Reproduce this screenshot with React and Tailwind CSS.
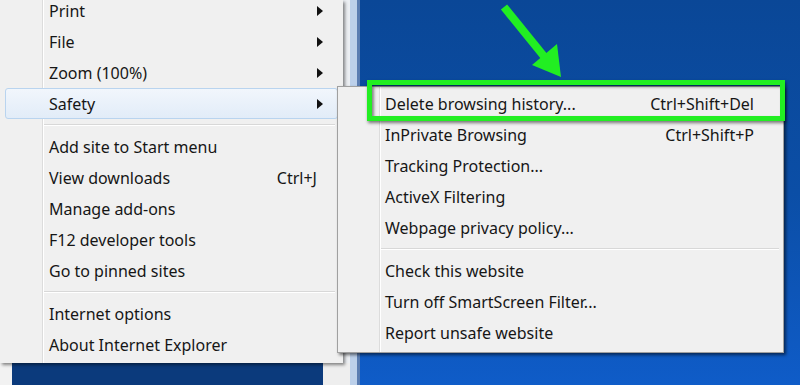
import React from "react";

const mainItems = [
  { label: "Print", sub: true },
  { label: "File", sub: true },
  { label: "Zoom (100%)", sub: true },
  { label: "Safety", sub: true, active: true },
  { sep: true },
  { label: "Add site to Start menu" },
  { label: "View downloads", key: "Ctrl+J" },
  { label: "Manage add-ons" },
  { label: "F12 developer tools" },
  { label: "Go to pinned sites" },
  { sep: true },
  { label: "Internet options" },
  { label: "About Internet Explorer" },
];

const safetyItems = [
  { label: "Delete browsing history...", key: "Ctrl+Shift+Del" },
  { label: "InPrivate Browsing", key: "Ctrl+Shift+P" },
  { label: "Tracking Protection..." },
  { label: "ActiveX Filtering" },
  { label: "Webpage privacy policy..." },
  { sep: true },
  { label: "Check this website" },
  { label: "Turn off SmartScreen Filter..." },
  { label: "Report unsafe website" },
];

function SubArrow() {
  return (
    <svg width="6" height="10" viewBox="0 0 6 10" className="shrink-0">
      <polygon points="0,0 6,5 0,10" fill="#111" />
    </svg>
  );
}

function Separator({ inset }) {
  return (
    <div className={`h-[12px] flex flex-col justify-center ${inset}`}>
      <div className="h-px bg-[#d8d8d8]" />
      <div className="h-px bg-white" />
    </div>
  );
}

function Gutter({ left }) {
  return (
    <div className={`absolute top-0 bottom-0 w-[2px] flex ${left}`}>
      <div className="w-px bg-[#dcdcdc]" />
      <div className="w-px bg-white" />
    </div>
  );
}

function MainMenu() {
  return (
    <div className="relative w-[343px] h-[363px] bg-[#f0f0f0] shadow-[2px_2px_3px_rgba(0,0,0,0.45)] overflow-hidden">
      <Gutter left="left-[42px]" />
      <div className="relative flex flex-col mt-[-5px]">
        {mainItems.map((it, i) =>
          it.sep ? (
            <Separator key={i} inset="ml-[44px] mr-[8px]" />
          ) : (
            <div
              key={i}
              className={`h-[31px] flex items-center ml-[5px] mr-[5px] pl-[43px] pr-[14px] border ${
                it.active
                  ? "rounded-[3px] border-[#b9d4ef] bg-gradient-to-b from-[#f1f6fc] to-[#e2ecf8]"
                  : "border-transparent"
              }`}
            >
              <span className="flex-1">{it.label}</span>
              {it.key && <span className="mr-[6px]">{it.key}</span>}
              {it.sub && <SubArrow />}
            </div>
          )
        )}
      </div>
    </div>
  );
}

function SafetyMenu() {
  return (
    <div className="absolute left-[337px] top-[86px] w-[447px] h-[267px] bg-[#f0f0f0] border border-[#a0a0a0] shadow-[2px_2px_3px_rgba(0,0,0,0.55)]">
      <Gutter left="left-[41px]" />
      <div className="relative flex flex-col pt-[1px]">
        {safetyItems.map((it, i) =>
          it.sep ? (
            <Separator key={i} inset="ml-[43px] mr-[4px]" />
          ) : (
            <div key={i} className="h-[31px] flex items-center pl-[47px] pr-[29px]">
              <span className="flex-1">{it.label}</span>
              {it.key && <span>{it.key}</span>}
            </div>
          )
        )}
      </div>
    </div>
  );
}

export default function App() {
  return (
    <div className="relative w-[800px] h-[385px] overflow-hidden flex font-['Noto_Sans',sans-serif] text-[16px] text-[#161616]">
      {/* IE window behind the menus */}
      <div className="w-[350px] flex flex-col bg-[#eceff3]">
        <MainMenu />
        <div className="flex-1 flex">
          <div className="w-[12px] bg-[#f2f2f2]" />
          <div className="w-[311px] bg-[#0b3a7c]" />
          <div className="flex-1 bg-[#eeeeee]" />
        </div>
      </div>
      <div className="w-[7px] bg-[#bcd0ea]" />
      <div className="w-[3px] bg-[#5a7db2]" />
      <div className="flex-1 bg-gradient-to-b from-[#0a4797] via-[#0b4ea6] to-[#0f5cc8]" />

      <SafetyMenu />

      {/* green highlight frame around "Delete browsing history" */}
      <div className="absolute left-[367px] top-[80px] w-[418px] h-[41px] border-[5px] border-[#22ee22] shadow-[1px_2px_3px_rgba(0,0,0,0.5)]">
        <div className="w-full h-full shadow-[inset_2px_2px_3px_rgba(0,0,0,0.45)]" />
      </div>

      {/* green arrow */}
      <svg className="absolute left-[495px] top-0" width="75" height="82" viewBox="0 0 75 82">
        <line x1="9" y1="7" x2="52" y2="60" stroke="#22ee22" strokeWidth="8" />
        <polygon points="37,65 62,44 66,77" fill="#22ee22" />
      </svg>
    </div>
  );
}
